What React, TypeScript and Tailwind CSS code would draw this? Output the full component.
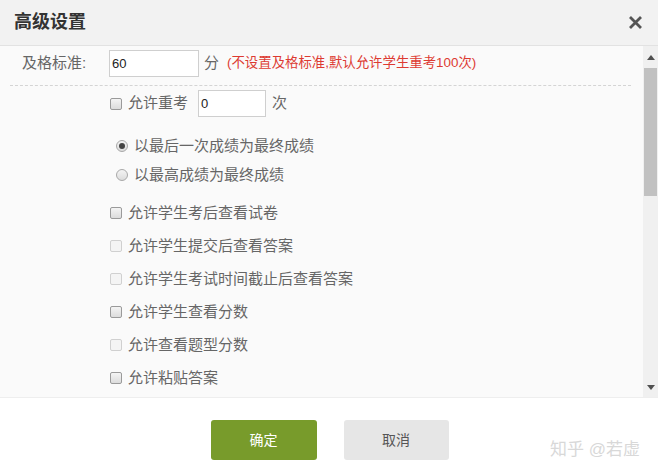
const font = "font-['Liberation_Sans','Noto_Sans_CJK_SC',sans-serif]";

function Checkbox({ disabled }: { disabled?: boolean }) {
  return (
    <span
      className={`inline-block h-[12px] w-[12px] shrink-0 rounded-[2px] border ${
        disabled ? "border-[#d0d0d0] bg-[#f4f4f4]" : "border-[#9a9a9a] bg-gradient-to-b from-[#f4f4f4] to-[#dcdcdc]"
      }`}
    />
  );
}

function Radio({ checked }: { checked?: boolean }) {
  return (
    <span className="grid h-[12px] w-[12px] shrink-0 place-items-center rounded-full border border-[#a8a8a8] bg-gradient-to-b from-[#f4f4f4] to-[#dcdcdc]">
      {checked && <span className="h-[6px] w-[6px] rounded-full bg-[#444]" />}
    </span>
  );
}

const options: { label: string; disabled?: boolean }[] = [
  { label: "允许学生考后查看试卷" },
  { label: "允许学生提交后查看答案", disabled: true },
  { label: "允许学生考试时间截止后查看答案", disabled: true },
  { label: "允许学生查看分数" },
  { label: "允许查看题型分数", disabled: true },
  { label: "允许粘贴答案" },
];

export default function App() {
  return (
    <div className={`flex h-[476px] w-[658px] flex-col overflow-hidden bg-white text-[#666] ${font}`}>
      <div className="flex h-[46px] shrink-0 items-center justify-between border-b border-[#e2e2e2] bg-[#f2f2f2] pl-[14px] pr-[15px]">
        <h1 className="text-[18px] font-bold text-[#333]">高级设置</h1>
        <svg width="15" height="15" viewBox="0 0 15 15" aria-hidden>
          <path d="M2 2L13 13M13 2L2 13" stroke="#555" strokeWidth="2.8" strokeLinecap="butt" />
        </svg>
      </div>

      <div className="flex h-[352px] shrink-0 border-b border-[#eeeeee] bg-[#fafafa]">
        <div className="flex-1 pt-[4px]">
          <div className="flex h-[27px] items-center text-[15px]">
            <span className="ml-[22px] w-[87px]">及格标准:</span>
            <div className="flex h-[27px] w-[90px] items-center border border-[#cfcfcf] bg-white pl-[2px] text-[13px] text-[#222]">
              60
            </div>
            <span className="ml-[5px]">分</span>
            <span className="ml-[8px] text-[13.4px] text-[#dd3a32]">(不设置及格标准,默认允许学生重考100次)</span>
          </div>
          <div className="ml-[10px] mr-[12px] mt-[8px] border-t border-dashed border-[#d4d4d4]" />

          <div className="mt-[4px] flex h-[27px] items-center pl-[110px] text-[15px]">
            <Checkbox />
            <span className="ml-[6px]">允许重考</span>
            <div className="ml-[10px] flex h-[27px] w-[68px] items-center border border-[#cfcfcf] bg-white pl-[2px] text-[13px] text-[#222]">
              0
            </div>
            <span className="ml-[6px]">次</span>
          </div>

          <div className="mt-[19px] flex flex-col gap-[9px] pl-[116px] text-[15px]">
            <label className="flex h-[20px] items-center gap-[6px]">
              <Radio checked />
              <span>以最后一次成绩为最终成绩</span>
            </label>
            <label className="flex h-[20px] items-center gap-[6px]">
              <Radio />
              <span>以最高成绩为最终成绩</span>
            </label>
          </div>

          <ul className="mt-[18px] flex flex-col gap-[13px] pl-[110px] text-[15px]">
            {options.map((o) => (
              <li key={o.label} className="flex h-[20px] items-center gap-[6px]">
                <Checkbox disabled={o.disabled} />
                <span>{o.label}</span>
              </li>
            ))}
          </ul>
        </div>

        <div className="flex w-[15px] shrink-0 flex-col bg-[#f0f0f0]">
          <div className="grid h-[22px] place-items-center">
            <svg width="8" height="5" viewBox="0 0 8 5" aria-hidden>
              <path d="M0 5L4 0L8 5Z" fill="#505050" />
            </svg>
          </div>
          <div className="mx-[1px] h-[128px] bg-[#c1c1c1]" />
          <div className="flex-1" />
          <div className="grid h-[20px] place-items-center">
            <svg width="8" height="5" viewBox="0 0 8 5" aria-hidden>
              <path d="M0 0L4 5L8 0Z" fill="#505050" />
            </svg>
          </div>
        </div>
      </div>

      <div className="relative flex flex-1 items-start justify-center gap-[27px] pt-[22px] pl-[1px]">
        <button className="h-[40px] w-[106px] rounded-[3px] bg-[#789b2b] text-[14px] text-white">确定</button>
        <button className="h-[40px] w-[105px] rounded-[3px] bg-[#e6e6e6] text-[14px] text-[#555]">取消</button>
        <span className="absolute bottom-[14px] right-[18px] text-[17px] text-[#d8d8d8]">知乎 @若虚</span>
      </div>
    </div>
  );
}
